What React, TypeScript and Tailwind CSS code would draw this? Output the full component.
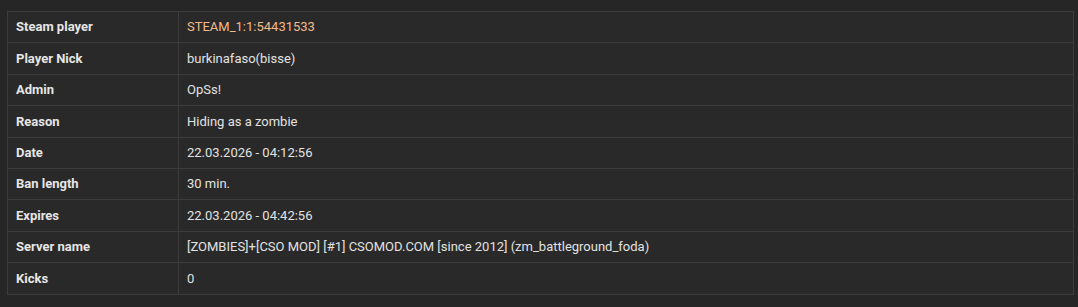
const rows: { label: string; value: string; accent?: boolean }[] = [
  { label: "Steam player", value: "STEAM_1:1:54431533", accent: true },
  { label: "Player Nick", value: "burkinafaso(bisse)" },
  { label: "Admin", value: "OpSs!" },
  { label: "Reason", value: "Hiding as a zombie" },
  { label: "Date", value: "22.03.2026 - 04:12:56" },
  { label: "Ban length", value: "30 min." },
  { label: "Expires", value: "22.03.2026 - 04:42:56" },
  { label: "Server name", value: "[ZOMBIES]+[CSO MOD] [#1] CSOMOD.COM [since 2012] (zm_battleground_foda)" },
  { label: "Kicks", value: "0" },
];

export default function App() {
  return (
    <div className="w-[1078px] h-[307px] bg-[#262626] pt-[11px] pl-[7px] pr-[4px] font-['Roboto','Liberation_Sans',sans-serif] text-[13px]">
      <table className="w-full border-collapse border border-[#3c3c3c] bg-[#292929]">
        <tbody>
          {rows.map((r) => (
            <tr key={r.label} className="h-[31.4px] border-b border-[#3c3c3c]">
              <td className="w-[171px] px-2 font-bold text-[#e6e6e6] border-r border-[#3c3c3c]">{r.label}</td>
              <td className={`px-2 ${r.accent ? "text-[#f3b98a]" : "text-[#e2e2e2]"}`}>{r.value}</td>
            </tr>
          ))}
        </tbody>
      </table>
    </div>
  );
}
